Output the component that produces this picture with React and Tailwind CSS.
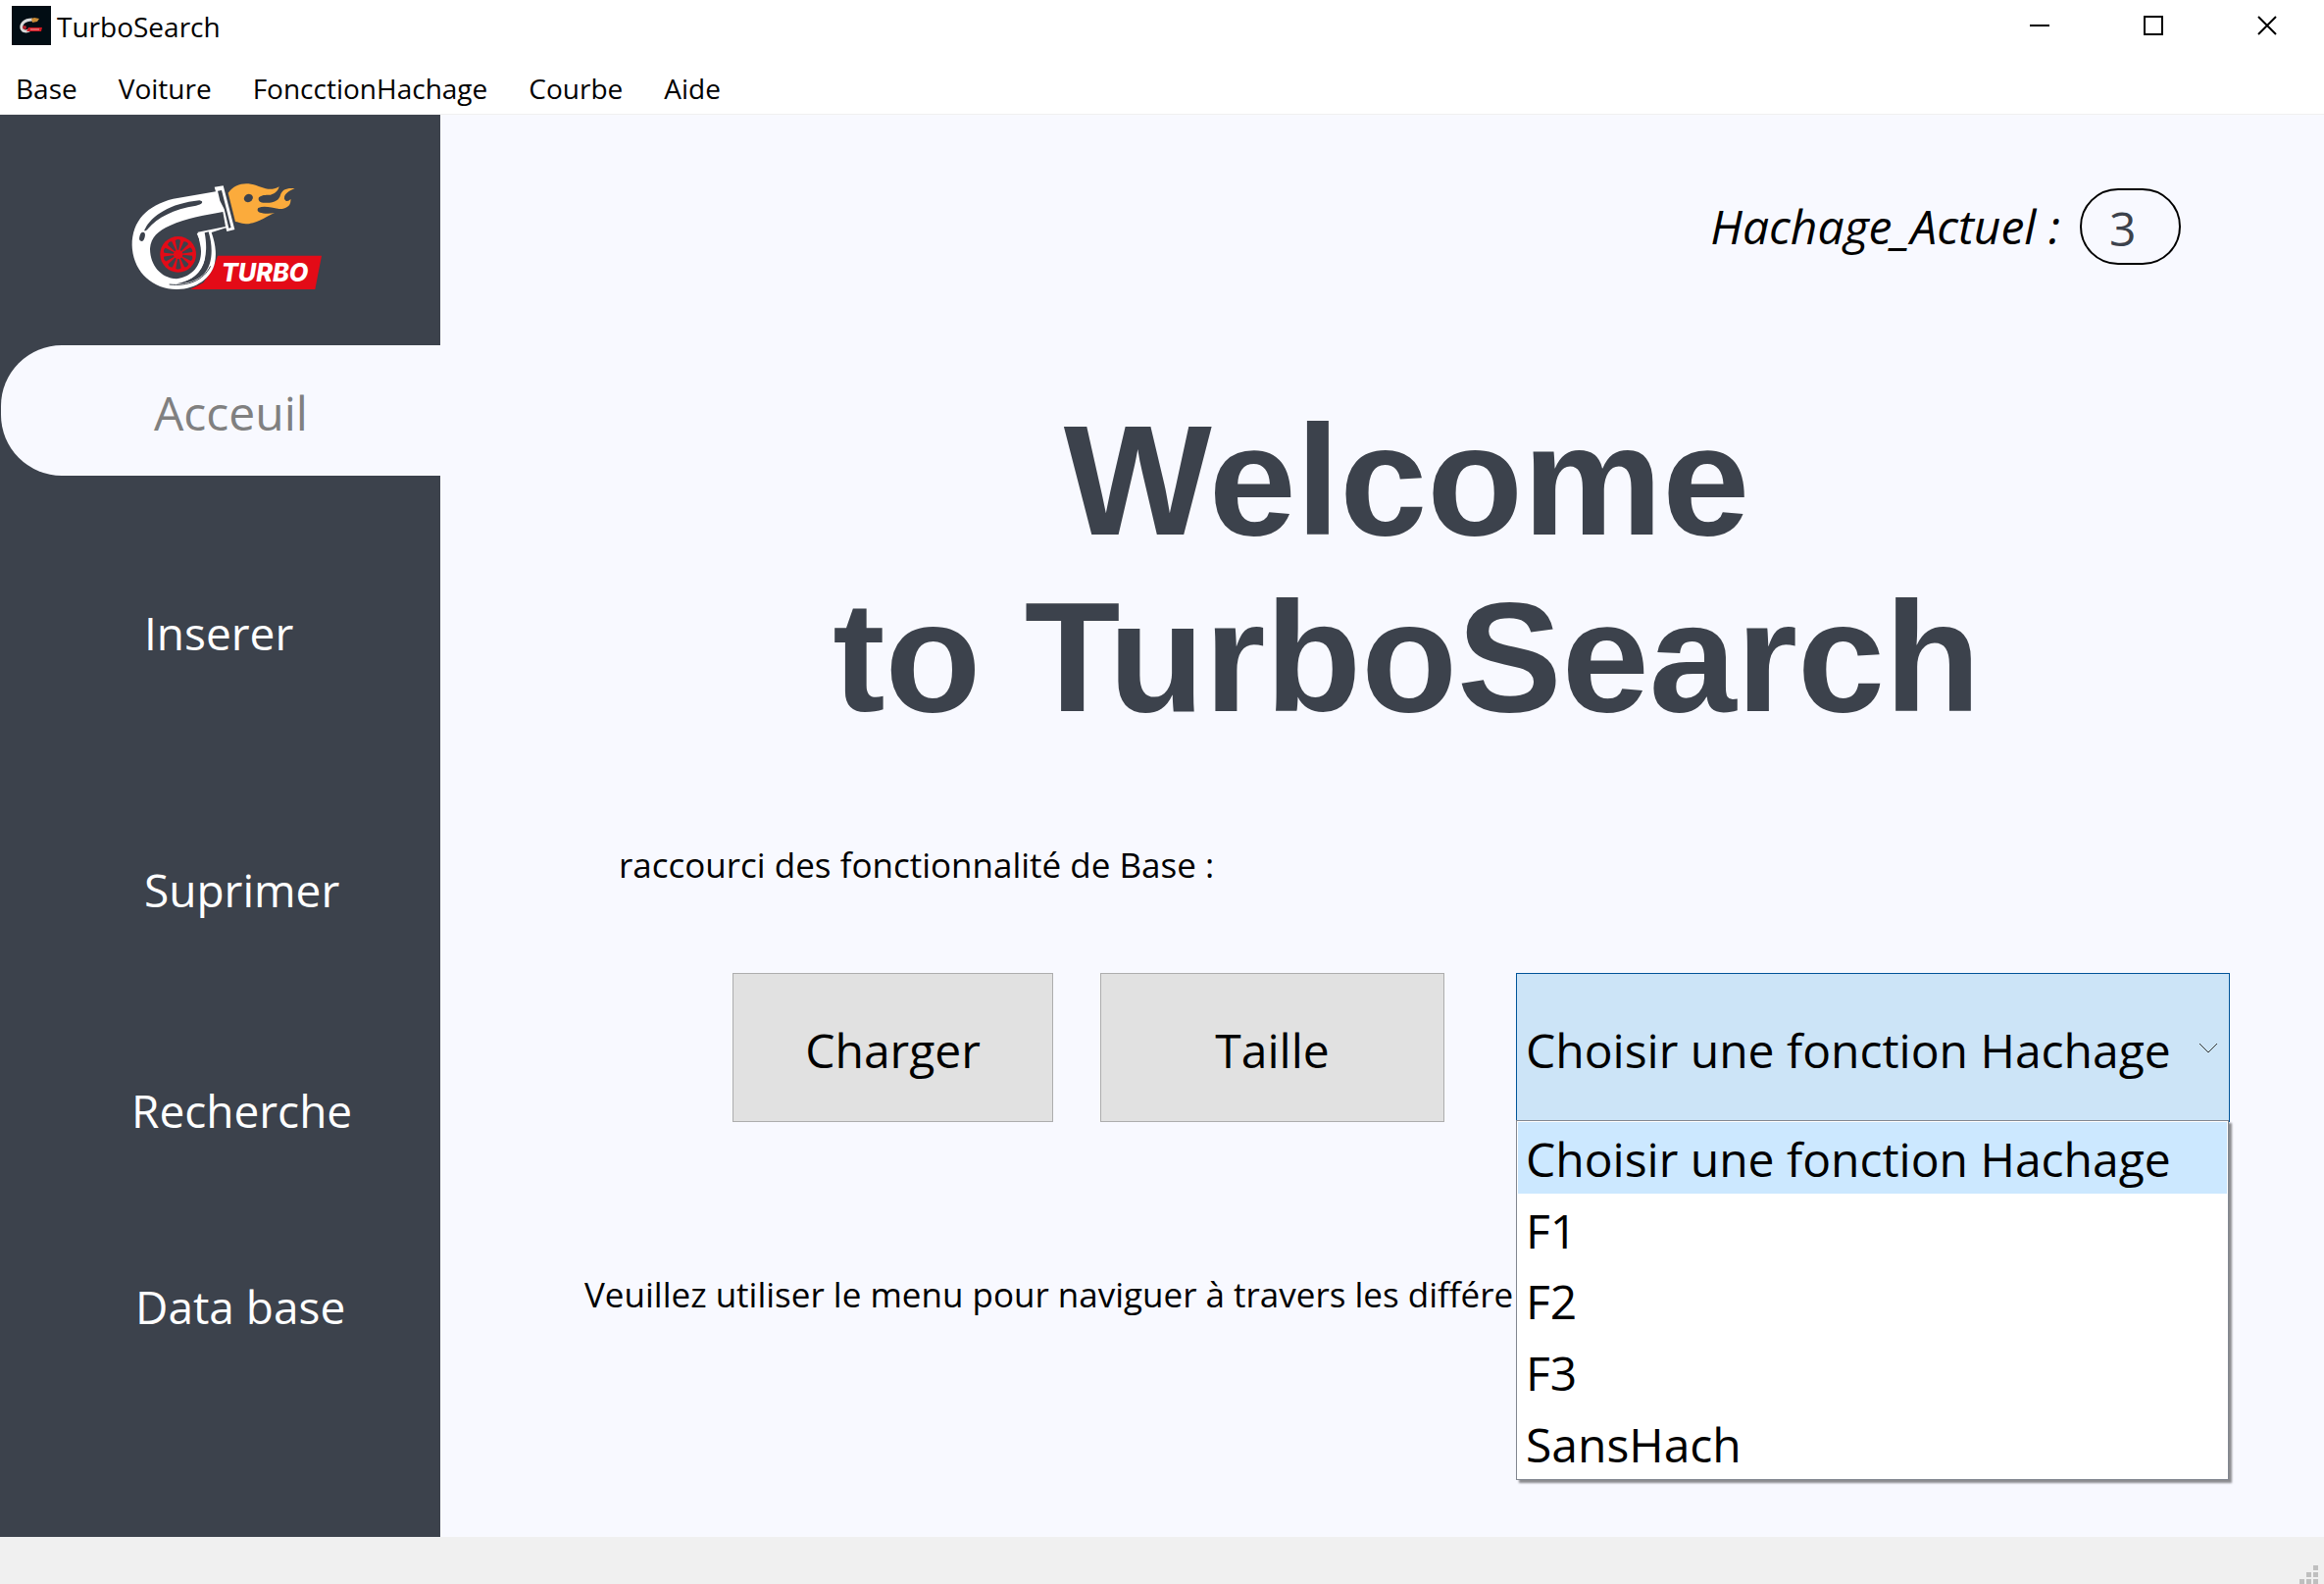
const turboRays = [0, 36, 72, 108, 144, 180, 216, 252, 288, 324];

function TurboLogo({ className }) {
  return (
    <svg className={className} viewBox="0 0 660 420" role="img" aria-label="Turbo">
      <path d="M306 272 L624 272 L604 375 L222 375 L262 355 L290 315 Z" fill="#e30b17" />
      <path
        d="M296 62 L323 58 L358 192 L334 198 L331 187 L287 201 C299 235 303 265 297 295 C287 340 240 376 180 375 C105 374 46 320 44 240 C44 165 90 118 170 98 L300 76 Z"
        fill="#ffffff"
      />
      <path
        d="M322 138 L330 183 L282 193 L245 200 L252 236 C264 285 240 335 180 343 C130 340 99 300 99 250 C102 215 124 196 160 180 C210 156 270 148 322 138 Z"
        fill="#3c424c"
      />
      <path d="M84 190 C104 150 160 112 250 103 C266 106 258 116 240 119 C170 128 120 158 94 188 C86 199 78 198 84 190 Z" fill="#3c424c" />
      <ellipse cx="75" cy="214" rx="8" ry="14" fill="#3c424c" transform="rotate(15 75 214)" />
      <path d="M306 74 L318 72 L347 186 L340 188 L326 130 L313 104 Z" fill="#3c424c" />
      <path d="M266 202 L278 199 C292 245 292 300 262 330 C238 352 205 358 180 358 C228 350 256 322 266 286 C273 256 271 228 266 202 Z" fill="#3c424c" />
      <path d="M246 203 C268 250 268 290 246 318 C228 342 200 352 160 350" fill="none" stroke="#ffffff" strokeWidth="8" />
      <path d="M158 360 C215 366 262 348 284 304" fill="none" stroke="#3c424c" strokeWidth="3" />
      <circle cx="185" cy="268" r="55" fill="#e30b17" />
      <g fill="#3c424c">
        {turboRays.map((a) => (
          <path key={a} d="M182 254 L176 226 Q185 219 192 225 L187 254 Z" transform={`rotate(${a} 185 268)`} />
        ))}
      </g>
      <path
        d="M338 80 C355 56 382 48 408 53 C440 58 460 80 494 61 C490 76 480 82 468 86 C450 86 440 86 432 94 C428 104 436 110 448 110 C480 112 494 102 498 86 C504 70 518 64 542 67 C524 74 508 84 510 98 C514 108 524 106 529 98 C532 120 514 130 494 129 C470 126 450 118 430 126 C422 138 436 146 480 142 C456 150 432 174 392 175 C376 174 366 168 360 168 Z"
        fill="#fbab3c"
      />
      <ellipse cx="400" cy="96" rx="14" ry="12" fill="#3c424c" transform="rotate(-30 400 96)" />
      <text x="450" y="350" textAnchor="middle" fontSize="76" fontWeight="800" fontStyle="italic" fontFamily="Inter, sans-serif" fill="#ffffff">
        TURBO
      </text>
    </svg>
  );
}

function AppIcon() {
  return (
    <svg className="h-10 w-10" viewBox="0 0 40 40" aria-hidden="true">
      <rect width="40" height="40" fill="#020d14" />
      <path d="M21 14 C12 14 9 19 10 23 C12 27 15 26 18 25" fill="none" stroke="#d8d8d8" strokeWidth="3" />
      <circle cx="13" cy="22" r="2" fill="#b3202a" />
      <path d="M20 13 L23 12 L28 13 L26 16 L21 17 Z" fill="#c98a35" />
      <path d="M17 22 L31 22 L30 26 L15 26 Z" fill="#d01822" />
      <path d="M19 24 H28" stroke="#f0a8a8" strokeWidth="1" />
    </svg>
  );
}

const menus = ["Base", "Voiture", "FoncctionHachage", "Courbe", "Aide"];
const options = ["Choisir une fonction Hachage", "F1", "F2", "F3", "SansHach"];

function TitleBar() {
  return (
    <header className="flex h-[52px] items-center bg-white">
      <div className="flex flex-1 items-center gap-1.5 pl-3">
        <AppIcon />
        <h2 className="pt-0.5 text-[28px] leading-10">TurboSearch</h2>
      </div>
      <div className="flex">
        <button aria-label="Réduire" className="flex h-[52px] w-[116px] items-center justify-center">
          <svg className="h-5 w-5" viewBox="0 0 20 20"><path d="M0 10H20" stroke="#000" strokeWidth="2" /></svg>
        </button>
        <button aria-label="Agrandir" className="flex h-[52px] w-[116px] items-center justify-center">
          <svg className="h-5 w-5" viewBox="0 0 20 20"><path d="M1 1H19V19H1Z" fill="none" stroke="#000" strokeWidth="2" /></svg>
        </button>
        <button aria-label="Fermer" className="flex h-[52px] w-[116px] items-center justify-center">
          <svg className="h-5 w-5" viewBox="0 0 20 20"><path d="M1 1L19 19M19 1L1 19" stroke="#000" strokeWidth="2" /></svg>
        </button>
      </div>
    </header>
  );
}

function MenuBar() {
  return (
    <nav className="flex h-[65px] items-center gap-[42px] border-b border-[#f0f0f0] bg-white px-4 pt-3">
      {menus.map((m) => (
        <button key={m} className="text-[28px] leading-10">{m}</button>
      ))}
    </nav>
  );
}

function Sidebar() {
  return (
    <aside className="flex w-[449px] shrink-0 flex-col bg-[#3c424c] text-[46px] leading-[64px] text-white">
      <div className="flex h-[235px] items-start pt-[53px] pl-[120px]">
        <TurboLogo className="h-[140px] w-[220px]" />
      </div>
      <button className="ml-px h-[133px] rounded-l-[62px] bg-[#f8f9ff] pt-1 pl-[156px] text-left text-[48px] text-[#808080]">Acceuil</button>
      <button className="mt-[128px] pl-[147px] text-left">Inserer</button>
      <button className="mt-[198px] pl-[147px] text-left">Suprimer</button>
      <button className="mt-[161px] pl-[134px] text-left">Recherche</button>
      <button className="mt-[136px] pl-[138px] text-left">Data base</button>
    </aside>
  );
}

function HashSelect() {
  return (
    <div className="relative w-[728px] shrink-0 text-[48px]">
      <select
        aria-label="Choisir une fonction Hachage"
        className="block h-[152px] w-full appearance-none border border-[#005499] bg-[#cce4f7] pt-1.5 pl-[9px]"
      >
        {options.map((o) => (
          <option key={o}>{o}</option>
        ))}
      </select>
      <svg className="pointer-events-none absolute top-[70px] right-3 h-3 w-5" viewBox="0 0 20 12" aria-hidden="true">
        <path d="M1 2L10 11L19 2" fill="none" stroke="#333" strokeWidth="1" />
      </svg>
      <ul role="listbox" className="absolute top-[150px] left-0 flex h-[367px] w-[727px] flex-col border border-[#828790] bg-white p-px shadow-[3px_3px_2px_#00000070]">
        {options.map((o, i) => (
          <li
            key={o}
            role="option"
            aria-selected={i === 0}
            className={
              i === 0
                ? "flex min-h-0 flex-1 items-center bg-[#cce8ff] pt-1 pl-2 leading-[64px]"
                : "flex min-h-0 flex-1 items-center pt-1 pl-2 leading-[64px]"
            }
          >
            {o}
          </li>
        ))}
      </ul>
    </div>
  );
}

function Content() {
  return (
    <main className="flex min-w-0 flex-1 flex-col bg-[#f8f9ff]">
      <div className="mt-[75px] mr-[146px] flex items-center justify-end gap-5">
        <label htmlFor="hash" className="text-[48px] leading-[78px] italic">Hachage_Actuel :</label>
        <output id="hash" className="flex h-[78px] w-[103px] items-center rounded-[40px] border-2 border-black pt-1 pl-7 text-[48px] text-[#3c424c]">3</output>
      </div>
      <h1 className="mt-[130px] pl-[50px] text-center font-['Liberation_Sans',sans-serif] text-[160px] leading-[180px] font-bold text-[#3c424c]">
        Welcome
        <br />
        to TurboSearch
      </h1>
      <p className="mt-[96px] pl-[182px] text-[35px] leading-[52px]">raccourci des fonctionnalité de Base :</p>
      <div className="mt-[84px] flex items-start pr-24 pl-[298px]">
        <button className="mr-[48px] h-[152px] w-[327px] border border-[#adadad] bg-[#e1e1e1] pt-1.5 text-[48px]">Charger</button>
        <button className="mr-auto h-[152px] w-[351px] border border-[#adadad] bg-[#e1e1e1] pt-1.5 text-[48px]">Taille</button>
        <HashSelect />
      </div>
      <p className="mt-[150px] pl-[147px] text-[35px] leading-[52px] whitespace-nowrap">
        Veuillez utiliser le menu pour naviguer à travers les différe
      </p>
    </main>
  );
}

function StatusBar() {
  return (
    <footer className="flex h-12 items-end justify-end bg-[#f0f0f0] pr-1.5">
      <svg className="h-[19px] w-[19px]" viewBox="0 0 19 19" fill="#bfbfbf" aria-hidden="true">
        <path d="M14 0h5v5h-5zM7 7h5v5h-5zM14 7h5v5h-5zM0 14h5v5h-5zM7 14h5v5h-5zM14 14h5v5h-5z" />
      </svg>
    </footer>
  );
}

export default function App() {
  return (
    <div className="flex min-h-screen flex-col overflow-hidden font-['Open_Sans','Noto_Sans',sans-serif] text-black">
      <TitleBar />
      <MenuBar />
      <div className="flex flex-1">
        <Sidebar />
        <Content />
      </div>
      <StatusBar />
    </div>
  );
}
